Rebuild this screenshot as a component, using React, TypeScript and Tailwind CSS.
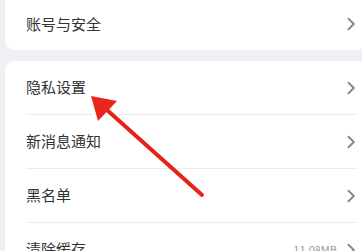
const ROWS = [
  { label: "隐私设置" },
  { label: "新消息通知" },
  { label: "黑名单" },
  { label: "清除缓存", value: "11.08MB" },
];

function Chevron() {
  return (
    <svg width="10" height="14" viewBox="0 0 10 14" className="shrink-0">
      <path d="M2.5 1.8 L7.8 7 L2.5 12.2" fill="none" stroke="#8a8a8a" strokeWidth="2" strokeLinecap="round" strokeLinejoin="round" />
    </svg>
  );
}

export default function App() {
  return (
    <div
      className="relative h-[251px] w-[362px] overflow-hidden bg-[#eef0f5]"
      style={{ fontFamily: '"Noto Sans CJK SC", "Noto Sans", sans-serif' }}
    >
      {/* account card, top cut off */}
      <div className="ml-[5px] mt-[-10px] flex h-[60px] w-[362px] items-center rounded-[10px] bg-white pl-[21px] pr-[11px] pt-[8px]">
        <span className="flex-1 text-[15px] text-[#333]">账号与安全</span>
        <Chevron />
      </div>

      {/* settings list */}
      <div className="ml-[5px] mt-[11px] w-[362px] rounded-[10px] bg-white pl-[21px]">
        {ROWS.map((r, i) => (
          <div key={r.label}>
            {i > 0 && <div className="mr-[10px] h-px bg-[#ececec]" />}
            <div className="flex h-[53px] items-center pr-[11px]">
              <span className="flex-1 text-[15px] text-[#333]">{r.label}</span>
              {r.value && <span className="mr-[9px] text-[11px] text-[#999]">{r.value}</span>}
              <Chevron />
            </div>
          </div>
        ))}
      </div>

      {/* red annotation arrow */}
      <svg className="absolute left-0 top-0" width="362" height="251" viewBox="0 0 362 251">
        <line x1="107" y1="110" x2="202" y2="195" stroke="#e4241c" strokeWidth="4" strokeLinecap="round" />
        <polygon points="91,96 117,101 98,121" fill="#e8261d" />
      </svg>
    </div>
  );
}
